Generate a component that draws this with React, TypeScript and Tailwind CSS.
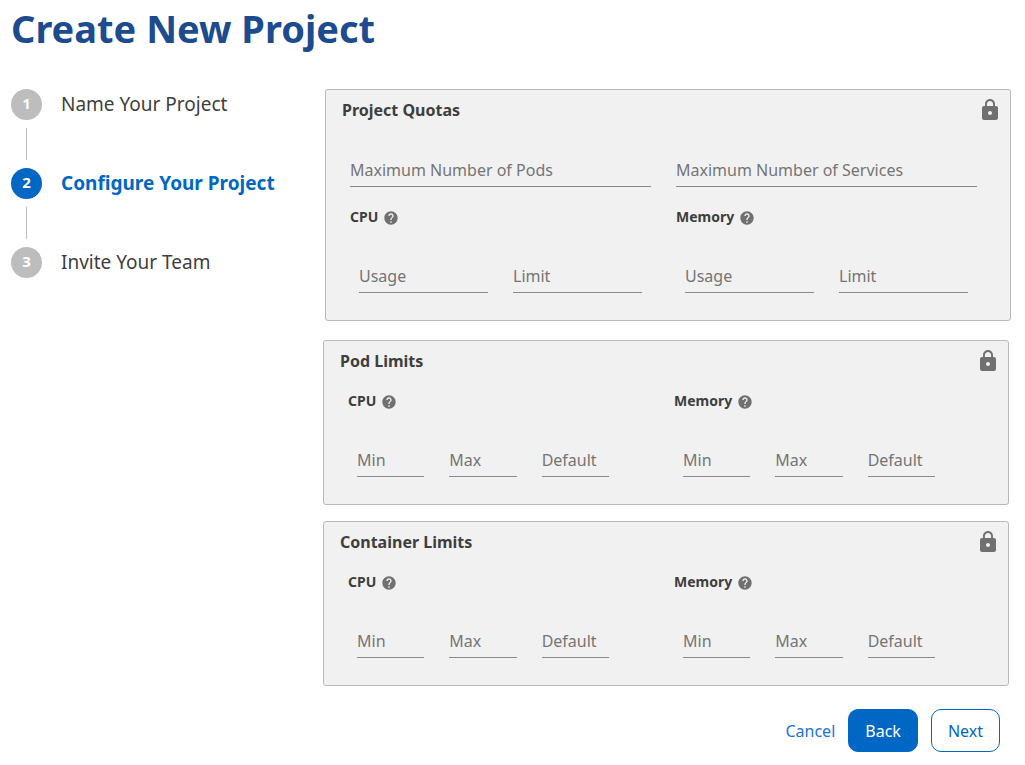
import { useId } from "react";
import { MdHelp, MdLock } from "react-icons/md";

function Field({ label }: { label: string }) {
  const id = useId();
  return (
    <div className="grid min-w-0">
      <input
        id={id}
        type="text"
        placeholder=" "
        className="peer col-start-1 row-start-1 h-[29px] w-full border-b border-[#8b8b8b] bg-transparent pb-1 text-base leading-6 text-[#3e3e3e] outline-none focus:border-[#0067c5]"
      />
      <label
        htmlFor={id}
        className="pointer-events-none invisible col-start-1 row-start-1 text-base leading-6 whitespace-nowrap text-[#757575] peer-placeholder-shown:visible"
      >
        {label}
      </label>
    </div>
  );
}

function Resource({ name, fields }: { name: string; fields: string[] }) {
  return (
    <fieldset className="min-w-0">
      <legend className="flex h-5 items-center gap-[5px] text-sm font-bold">
        {name}
        <MdHelp className="mt-0.5 size-4 text-[#707070]" aria-hidden="true" />
      </legend>
      {fields.length === 3 ? (
        <div className="mt-[37px] grid grid-cols-3 gap-x-[25px] pr-10 pl-[9px]">
          {fields.map((field) => (
            <Field key={field} label={field} />
          ))}
        </div>
      ) : (
        <div className="mt-[37px] grid grid-cols-2 gap-x-[25px] px-[9px]">
          {fields.map((field) => (
            <Field key={field} label={field} />
          ))}
        </div>
      )}
    </fieldset>
  );
}

function Card({
  title,
  children,
}: {
  title: string;
  children: React.ReactNode;
}) {
  return (
    <section className="rounded-[3px] border border-[#b9b9b9] bg-[#f1f1f1] pt-2 pb-[27px]">
      <header className="flex items-center justify-between pr-2 pl-4">
        <h2 className="text-base leading-6 font-bold">{title}</h2>
        <MdLock className="size-6 text-[#707070]" aria-label="Locked" />
      </header>
      <div className="pr-[33px] pl-6">{children}</div>
    </section>
  );
}

function LimitsCard({ title }: { title: string }) {
  return (
    <Card title={title}>
      <div className="mt-[18px] grid grid-cols-2 gap-x-[25px]">
        <Resource name="CPU" fields={["Min", "Max", "Default"]} />
        <Resource name="Memory" fields={["Min", "Max", "Default"]} />
      </div>
    </Card>
  );
}

const steps = ["Name Your Project", "Configure Your Project", "Invite Your Team"];
const currentStep = 1;

function Stepper() {
  return (
    <ol className="w-[312px] shrink-0">
      {steps.map((step, index) => {
        const active = index === currentStep;
        return (
          <li key={step} aria-current={active ? "step" : undefined}>
            {index > 0 && <div className="my-2 ml-[15px] h-8 w-px bg-[#bdbdbd]" />}
            <div className="flex items-center gap-[19px]">
              <span
                className={
                  active
                    ? "flex size-[31px] items-center justify-center rounded-full bg-[#0067c5] pb-0.5 text-[15px] font-bold text-white"
                    : "flex size-[31px] items-center justify-center rounded-full bg-[#bdbdbd] pb-0.5 text-[15px] font-bold text-white"
                }
              >
                {index + 1}
              </span>
              <span
                className={
                  active
                    ? "pb-0.5 text-[19px] leading-7 font-bold text-[#0067c5]"
                    : "pb-0.5 text-[19px] leading-7"
                }
              >
                {step}
              </span>
            </div>
          </li>
        );
      })}
    </ol>
  );
}

export default function App() {
  return (
    <main className="bg-white pr-3.5 pb-3 pl-[11px] font-['Noto_Sans',sans-serif] text-[#3e3e3e]">
      <h1 className="pt-0.5 text-[38px] leading-[52px] font-bold text-[#1c4b90]">
        Create New Project
      </h1>
      <div className="mt-[35px] flex">
        <Stepper />
        <form className="min-w-0 flex-1" onSubmit={(event) => event.preventDefault()}>
          <div className="pl-0.5">
            <Card title="Project Quotas">
              <div className="mt-9 grid grid-cols-2 gap-x-[25px] gap-y-5">
                <Field label="Maximum Number of Pods" />
                <Field label="Maximum Number of Services" />
                <Resource name="CPU" fields={["Usage", "Limit"]} />
                <Resource name="Memory" fields={["Usage", "Limit"]} />
              </div>
            </Card>
          </div>
          <div className="mt-[19px] flex flex-col gap-4 pr-0.5">
            <LimitsCard title="Pod Limits" />
            <LimitsCard title="Container Limits" />
          </div>
          <div className="mt-[23px] mr-[11px] flex items-center justify-end gap-[13px]">
            <button type="button" className="text-base text-[#1a76d2]">
              Cancel
            </button>
            <button
              type="button"
              className="h-[43px] rounded-[10px] border border-[#0067c5] bg-[#0067c5] px-4 text-base text-white"
            >
              Back
            </button>
            <button
              type="submit"
              className="h-[43px] rounded-[10px] border border-[#0067c5] bg-white px-4 text-base text-[#0067c5]"
            >
              Next
            </button>
          </div>
        </form>
      </div>
    </main>
  );
}
